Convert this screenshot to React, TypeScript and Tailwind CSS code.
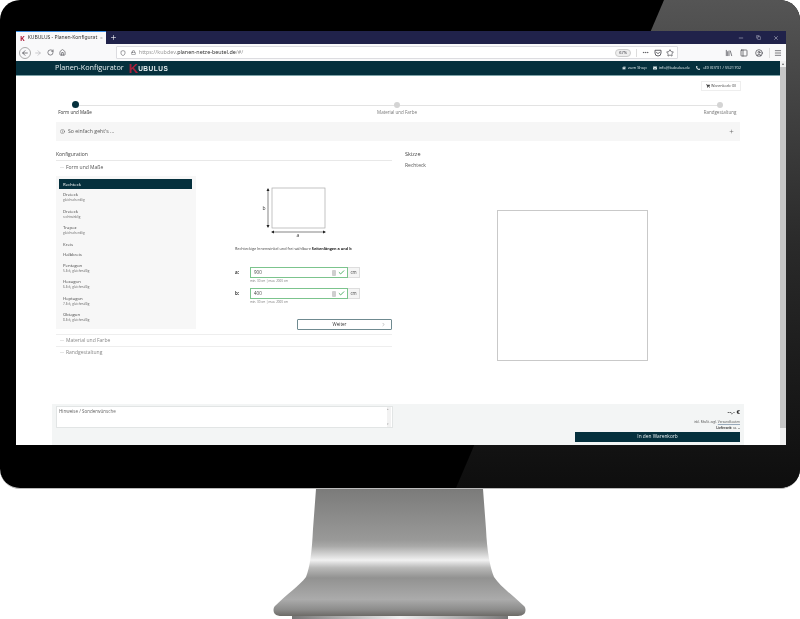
import {
  ArrowLeft,
  ArrowRight,
  Check,
  ChevronRight,
  CircleUser,
  Copy,
  Ellipsis,
  House,
  Info,
  Library,
  Lock,
  Menu,
  Minus,
  PanelLeft,
  Plus,
  RotateCw,
  Shield,
  Star,
  X,
} from "lucide-react";
import { FaEnvelope, FaHome, FaPhoneAlt, FaShoppingCart } from "react-icons/fa";

const shapes = [
  { name: "Rechteck", active: true },
  { name: "Dreieck", sub: "gleichschenklig" },
  { name: "Dreieck", sub: "rechtwinklig" },
  { name: "Trapez", sub: "gleichschenklig" },
  { name: "Kreis" },
  { name: "Halbkreis" },
  { name: "Pentagon", sub: "5-Eck, gleichmäßig" },
  { name: "Hexagon", sub: "6-Eck, gleichmäßig" },
  { name: "Heptagon", sub: "7-Eck, gleichmäßig" },
  { name: "Oktagon", sub: "8-Eck, gleichmäßig" },
];

// Firefox's save-to-pocket button, lucide has no match for it
const PocketIcon = () => {
  return (
    <svg width="8" height="8" viewBox="0 0 16 16" fill="none" stroke="currentColor" strokeWidth="1.6" className="ml-[5px]">
      <path d="M2 2.5H14V8A6 6 0 0 1 2 8Z" strokeLinejoin="round" />
      <path d="M5 6.5L8 9.5L11 6.5" strokeLinecap="round" strokeLinejoin="round" />
    </svg>
  );
};

const BrowserChrome = () => {
  return (
    <div className="font-['Noto_Sans',sans-serif]">
      <div className="flex h-[13px] items-stretch bg-[#20224a]">
        <div className="flex w-[90px] items-center gap-[3px] border-t border-[#3b8fe8] bg-[#f9f9fa] pl-[4px] pr-[3px]">
          <span className="text-[7px] font-bold leading-none text-[#b01f3c]">K</span>
          <span className="flex-1 whitespace-nowrap text-[5px] text-[#333]">KUBULUS - Planen-Konfigurat</span>
          <X size={6} className="text-[#333]" />
        </div>
        <div className="flex w-[14px] items-center justify-center">
          <Plus size={7} className="text-white" />
        </div>
        <div className="flex flex-1 items-center justify-end gap-[12px] pr-[7px] text-[#cfd0dc]">
          <Minus size={6} />
          <Copy size={5} />
          <X size={6} />
        </div>
      </div>
      <div className="flex h-[17px] items-center bg-[#f9f9fa] pl-[3px] pr-[4px] text-[#3c3c44]">
        <div className="flex h-[12px] w-[12px] items-center justify-center rounded-full border border-[#aaa]">
          <ArrowLeft size={8} />
        </div>
        <ArrowRight size={8} className="ml-[3px] text-[#b5b5b9]" />
        <RotateCw size={7} className="ml-[5px]" />
        <House size={7} className="ml-[5px]" />
        <div className="ml-[50px] flex h-[13px] w-[566px] items-center rounded-[1px] border border-[#dcdce0] bg-white pl-[3px] pr-[3px]">
          <Shield size={6} />
          <Lock size={5} className="ml-[5px]" />
          <span className="ml-[3px] flex-1 text-[5.4px] text-[#999]">
            https://kubdev.<span className="text-[#333]">planen-netze-beutel.de</span>/#/
          </span>
          <span className="rounded-[4px] border border-[#ccc] bg-[#eee] px-[3px] text-[4px] leading-[6px]">67%</span>
          <span className="mx-[5px] h-[8px] w-px bg-[#ddd]" />
          <Ellipsis size={7} />
          <PocketIcon />
          <Star size={8} className="ml-[4px]" />
        </div>
        <div className="ml-[47px] flex items-center gap-[7px]">
          <Library size={8} />
          <PanelLeft size={8} />
          <CircleUser size={8} />
        </div>
        <div className="ml-[6px] h-[10px] w-px bg-[#ddd]" />
        <Menu size={8} className="ml-[4px]" />
      </div>
    </div>
  );
};

const PageHeader = () => {
  return (
    <header className="flex h-[15px] shrink-0 items-center justify-between border-b border-[#7fa3a8] bg-[#05303d] pl-[39px] pr-[39px] text-white">
      <div className="flex items-center">
        <span className="text-[7.3px] leading-none text-[#e6eef0]">Planen-Konfigurator</span>
        <span className="ml-[5px] font-['Liberation_Sans',sans-serif] text-[13px] font-bold leading-none text-[#a51f3a]">K</span>
        <span className="mt-[2px] font-['Liberation_Sans',sans-serif] text-[6.5px] font-bold leading-none tracking-[0.5px] text-[#e6eef0]">UBULUS</span>
      </div>
      <div className="flex items-center text-[4px] text-[#dfe8ea]">
        <FaHome size={4} />
        <span className="ml-[2px]">zum Shop</span>
        <FaEnvelope size={4} className="ml-[6px]" />
        <span className="ml-[2px]">info@kubulus.de</span>
        <FaPhoneAlt size={4} className="ml-[6px]" />
        <span className="ml-[2px]">+49 (0)731 / 5521702</span>
      </div>
    </header>
  );
};

const Stepper = () => {
  return (
    <div className="relative mx-[3px] mt-[10px] flex h-[14px] justify-between">
      <div className="absolute left-[16px] right-[17px] top-[4px] h-px bg-[#e3e3e3]" />
      <div className="relative flex w-[32px] flex-col items-center">
        <div className="h-[7px] w-[7px] rounded-full bg-[#05303d]" />
        <span className="mt-[1px] whitespace-nowrap text-[4.5px] leading-[6px] text-[#333]">Form und Maße</span>
      </div>
      <div className="relative flex w-[40px] flex-col items-center">
        <div className="mt-px h-[6px] w-[6px] rounded-full bg-[#d4d4d4]" />
        <span className="mt-[1px] whitespace-nowrap text-[4.5px] leading-[6px] text-[#777]">Material und Farbe</span>
      </div>
      <div className="relative flex w-[34px] flex-col items-center">
        <div className="mt-px h-[6px] w-[6px] rounded-full bg-[#d4d4d4]" />
        <span className="mt-[1px] whitespace-nowrap text-[4.5px] leading-[6px] text-[#777]">Randgestaltung</span>
      </div>
    </div>
  );
};

const ShapeList = () => {
  return (
    <div className="h-[153px] w-[140px] shrink-0 bg-[#f7f7f7] pl-[3px] pr-[4px] pt-[3px]">
      {shapes.map((shape, index) =>
        shape.active ? (
          <div key={index} className="flex h-[10px] items-center bg-[#05303d] pl-[4px] text-[4.3px] text-white">
            {shape.name}
          </div>
        ) : (
          <div
            key={index}
            className={`flex flex-col justify-center pl-[4px] text-[#444] ${shape.sub ? "h-[16.5px]" : "h-[10.5px]"}`}
          >
            <span className="text-[4.3px] leading-[6px]">{shape.name}</span>
            {shape.sub && <span className="text-[3.1px] leading-[6px] text-[#666]">{shape.sub}</span>}
          </div>
        ),
      )}
    </div>
  );
};

const SizeInput = ({ label, value }: { label: string; value: string }) => {
  return (
    <div>
      <div className="flex items-center">
        <span className="w-[15px] text-[4.5px] font-bold text-[#333]">{label}:</span>
        <div className="flex h-[11px] w-[98px] items-center border border-[#7cc48d] pl-[3px] pr-[2px] text-[4.5px] text-[#444]">
          <span className="flex-1">{value}</span>
          <span className="h-[6px] w-[4px] rounded-[1px] bg-[#cfcfcf]" />
          <Check size={7} strokeWidth={3} className="ml-[2px] text-[#3aa655]" />
        </div>
        <div className="flex h-[11px] w-[12px] items-center justify-center border border-l-0 border-[#ddd] bg-[#f5f5f5] text-[4.4px] text-[#444]">
          cm
        </div>
      </div>
      <div className="ml-[15px] mt-[1px] text-[3px] leading-[5px] text-[#777]">min. 30 cm | max. 2000 cm</div>
    </div>
  );
};

const ShapeForm = () => {
  return (
    <div className="flex-1 pl-[39px]">
      <svg width="70" height="52" viewBox="0 0 70 52" className="ml-[26px] mt-[9px]">
        <rect x="11" y="3" width="53" height="40" fill="#fff" stroke="#aaa" strokeWidth="0.7" />
        <path d="M7 4V42" stroke="#333" strokeWidth="0.6" />
        <path d="M7 3L5.5 6H8.5ZM7 43L5.5 40H8.5Z" fill="#222" />
        <path d="M11 47H64" stroke="#333" strokeWidth="0.6" />
        <path d="M10 47L13 45.5V48.5ZM65 47L62 45.5V48.5Z" fill="#222" />
        <text x="1.5" y="25" fontSize="5" fill="#333">b</text>
        <text x="35.5" y="52" fontSize="5" fill="#333">a</text>
      </svg>
      <p className="mt-[9px] whitespace-nowrap text-[3.8px] leading-[6px] text-[#444]">
        Rechteckige Innenwinkel und frei wählbare <b className="text-[#222]">Seitenlängen a und b</b>
      </p>
      <div className="mt-[15px] flex flex-col gap-[4px]">
        <SizeInput label="a" value="900" />
        <SizeInput label="b" value="400" />
      </div>
      <div className="ml-[62px] mt-[14px] flex h-[11px] w-[95px] items-center justify-center rounded-[1px] border border-[#6f8a90] text-[4.5px] text-[#333]">
        <span className="flex-1 text-center">Weiter</span>
        <ChevronRight size={5} className="mr-[5px] text-[#777]" />
      </div>
    </div>
  );
};

const AccordionTitle = ({ title, muted }: { title: string; muted?: boolean }) => {
  return (
    <div className={`flex items-center pl-[4px] ${muted ? "h-[12px] border-t border-[#eee] text-[#888]" : "h-[13px] text-[#555]"}`}>
      <span className="h-px w-[4px] bg-[#e6e6e6]" />
      <span className="ml-[2px] text-[5px]">{title}</span>
    </div>
  );
};

const PageBody = () => {
  return (
    <div className="flex flex-1 flex-col px-[40px]">
      <div className="mt-[5px] flex justify-end">
        <div className="-mr-px flex h-[10px] w-[40px] items-center justify-center gap-[1px] border border-[#eee] text-[3.8px] text-[#444]">
          <FaShoppingCart size={4} />
          Warenkorb (0)
        </div>
      </div>
      <Stepper />
      <div className="mt-[7px] flex h-[19px] items-center justify-between bg-[#f6f6f6] pl-[4px] pr-[6px] text-[5.2px] text-[#555]">
        <span className="flex items-center gap-[3px]">
          <Info size={5} />
          So einfach geht's ...
        </span>
        <Plus size={5} />
      </div>
      <div className="mt-[9px] flex gap-[13px]">
        <section className="w-[336px] shrink-0">
          <div className="h-[11px] border-b border-[#e8e8e8] text-[5px] leading-[8px] text-[#444]">Konfiguration</div>
          <AccordionTitle title="Form und Maße" />
          <div className="mt-[2px] flex h-[158px] items-start">
            <ShapeList />
            <ShapeForm />
          </div>
          <AccordionTitle title="Material und Farbe" muted />
          <AccordionTitle title="Randgestaltung" muted />
        </section>
        <section className="flex-1">
          <div className="text-[5.5px] leading-[8px] text-[#444]">Skizze</div>
          <div className="mt-[3px] text-[5px] leading-[8px] text-[#555]">Rechteck</div>
          <div className="ml-[92px] mt-[41px] h-[151px] w-[151px] border border-[#c9c9c9]" />
        </section>
      </div>
    </div>
  );
};

const OrderFooter = () => {
  return (
    <footer className="mx-[36px] flex h-[41px] shrink-0 justify-between bg-[#f3f5f5] pl-[4px] pr-[4px] pt-[2px]">
      <div className="flex h-[22px] w-[337px] border border-[#e2e5e5] bg-white pl-[2px] pr-[1px] text-[4.5px] text-[#666]">
        <span className="flex-1 leading-[9px]">Hinweise / Sonderwünsche</span>
        <div className="flex w-[4px] flex-col justify-between bg-[#f2f2f2] py-[1px] text-[3px] leading-[3px] text-[#aaa]">
          <span>▴</span>
          <span>▾</span>
        </div>
      </div>
      <div className="flex w-[165px] flex-col items-end">
        <div className="h-[8px] text-[6px] font-bold leading-[12px] text-[#222]">--,- €</div>
        <div className="mt-[5px] text-[3.2px] leading-[6px] text-[#555]">
          inkl. MwSt. zzgl. <span className="underline decoration-[#9ab]">Versandkosten</span>
        </div>
        <div className="text-[3.2px] leading-[6px] text-[#444]"><b>Lieferzeit:</b> ca. --</div>
        <div className="mt-[1px] flex h-[10px] w-full items-center justify-center bg-[#05303d] text-[4.8px] text-[#e6eef0]">
          In den Warenkorb
        </div>
      </div>
    </footer>
  );
};

const Scrollbar = () => {
  return (
    <div className="flex w-[6px] flex-col bg-[#f1f1f1] text-[#666]">
      <span className="h-[6px] text-center text-[4px] leading-[6px]">▴</span>
      <div className="h-[361px] bg-[#c6c6c6]" />
    </div>
  );
};

const Stand = () => {
  return (
    <svg width="256" height="130" viewBox="0 0 256 130" className="mx-auto block">
      <defs>
        <linearGradient id="neck" x1="0" y1="0" x2="0" y2="1">
          <stop offset="0" stopColor="#7b7b7a" />
          <stop offset="0.4" stopColor="#999998" />
          <stop offset="0.45" stopColor="#a9a9a8" />
          <stop offset="0.56" stopColor="#f1f1f1" />
          <stop offset="0.62" stopColor="#b9b9b8" />
          <stop offset="0.7" stopColor="#929291" />
          <stop offset="0.87" stopColor="#ababab" />
          <stop offset="0.95" stopColor="#8c8c8b" />
          <stop offset="1" stopColor="#6c6a66" />
        </linearGradient>
        <linearGradient id="foot" x1="0" y1="0" x2="1" y2="0">
          <stop offset="0" stopColor="#777" />
          <stop offset="0.5" stopColor="#f0f0f0" />
          <stop offset="1" stopColor="#777" />
        </linearGradient>
      </defs>
      <path
        d="M44 0H211L214 40C215 62 218 78 222 88C228 97 240 106 252 117C254 119 254 123 252 125Q250 127 246 127H10Q5 127 3 125C1 123 1 119 3 117C14 106 27 97 34 88C38 78 40 62 41 40Z"
        fill="url(#neck)"
      />
      <rect x="20" y="127" width="216" height="3" fill="url(#foot)" />
    </svg>
  );
};

const App = () => {
  return (
    <div className="h-[619px] w-[800px] overflow-hidden bg-white font-['Open_Sans',sans-serif]">
      <div className="relative h-[489px] overflow-hidden rounded-[20px] border-b border-[#bbb] bg-black pb-[43px] pl-[16px] pr-[14px] pt-[31px]">
        <div className="absolute inset-0 bg-gradient-to-b from-[#555] via-[#2a2a2a] to-[#0e0e0e] [clip-path:polygon(83%_0,100%_0,100%_100%,57%_100%)]" />
        <div className="relative flex h-[414px] flex-col bg-white blur-[0.25px]">
          <BrowserChrome />
          <div className="flex min-h-0 flex-1">
            <div className="flex min-w-0 flex-1 flex-col overflow-hidden">
              <PageHeader />
              <PageBody />
              <OrderFooter />
            </div>
            <Scrollbar />
          </div>
        </div>
      </div>
      <Stand />
    </div>
  );
};

export default App;
